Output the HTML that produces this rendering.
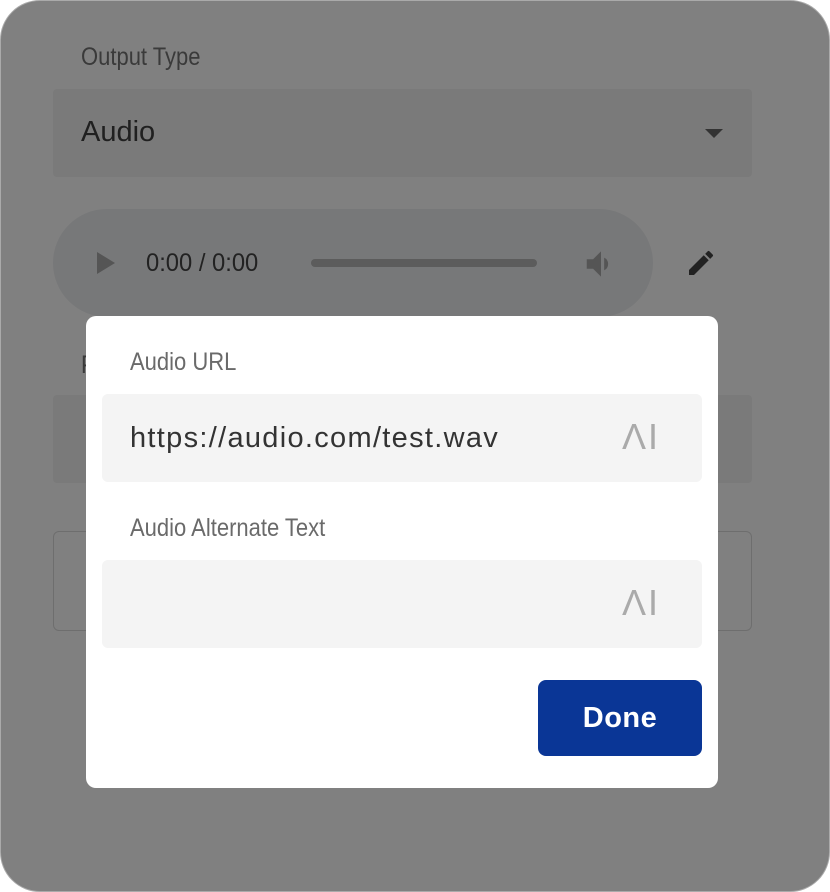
<!DOCTYPE html>
<html><head><style>
body{margin:0;width:830px;height:892px;background:#fff;position:relative;overflow:hidden;font-family:"Liberation Sans",sans-serif}
.frame{position:absolute;left:0;top:0;width:828px;height:890px;border:1px solid #aaa;border-radius:40px;background:#808080;overflow:hidden}
.a{position:absolute}
.lbl{font-size:25px;color:#3a3a3a;transform:scaleX(.88);transform-origin:left}
</style></head><body>
<div class="frame">
<div class="a lbl" style="left:80px;top:42px;">Output Type</div>
<div class="a" style="left:52px;top:88px;width:699px;height:88px;background:#7a7a7a;border-radius:4px"></div>
<div class="a" style="left:80px;top:115px;font-size:29px;color:#202020">Audio</div>
<div class="a" style="left:704px;top:128px;width:0;height:0;border-left:9px solid transparent;border-right:9px solid transparent;border-top:9px solid #333"></div>
<div class="a" style="left:52px;top:208px;width:600px;height:108px;background:#777879;border-radius:54px"></div>
<div class="a" style="left:96px;top:251px;width:0;height:0;border-top:11px solid transparent;border-bottom:11px solid transparent;border-left:18px solid #555"></div>
<div class="a" style="left:145px;top:248px;font-size:25px;color:#222;transform:scaleX(.95);transform-origin:left">0:00 / 0:00</div>
<div class="a" style="left:310px;top:258px;width:226px;height:8px;background:#5c5c5c;border-radius:4px"></div>
<svg class="a" style="left:580px;top:244px" width="40" height="38" viewBox="0 0 24 24"><path d="M3 9v6h4l5 5V4L7 9H3zm13.5 3A4.5 4.5 0 0014 8v8a4.5 4.5 0 002.5-4z" fill="#555"/></svg>
<svg class="a" style="left:684px;top:246px" width="32" height="32" viewBox="0 0 24 24"><path d="M3 17.25V21h3.75L17.81 9.94l-3.75-3.75L3 17.25zM20.71 7.04a1 1 0 000-1.41l-2.34-2.34a1 1 0 00-1.41 0l-1.83 1.83 3.75 3.75 1.83-1.83z" fill="#222"/></svg>
<div class="a lbl" style="left:80px;top:350px">P</div>
<div class="a" style="left:52px;top:394px;width:699px;height:88px;background:#7a7a7a;border-radius:4px"></div>
<div class="a" style="left:52px;top:530px;width:697px;height:98px;border:1px solid #6e6e6e;border-radius:6px"></div>
</div>
<div class="a" style="left:86px;top:316px;width:632px;height:472px;background:#fff;border-radius:10px">
<div class="a lbl" style="left:44px;top:32px;color:#6a6a6a">Audio URL</div>
<div class="a" style="left:16px;top:78px;width:600px;height:88px;background:#f4f4f4;border-radius:6px"></div>
<div class="a" style="left:44px;top:106px;font-size:29px;color:#333;letter-spacing:1.3px">https://audio.com/test.wav</div>
<div class="a" style="left:536px;top:100px;font-size:36px;color:#aaa;letter-spacing:2px">ΛI</div>
<div class="a lbl" style="left:44px;top:198px;color:#6a6a6a">Audio Alternate Text</div>
<div class="a" style="left:16px;top:244px;width:600px;height:88px;background:#f4f4f4;border-radius:6px"></div>
<div class="a" style="left:536px;top:266px;font-size:36px;color:#aaa;letter-spacing:2px">ΛI</div>
<div class="a" style="left:452px;top:364px;width:164px;height:76px;background:#0a3696;border-radius:8px;color:#fff;font-size:29px;font-weight:600;text-align:center;line-height:76px;letter-spacing:.5px">Done</div>
</div>
</body></html>
